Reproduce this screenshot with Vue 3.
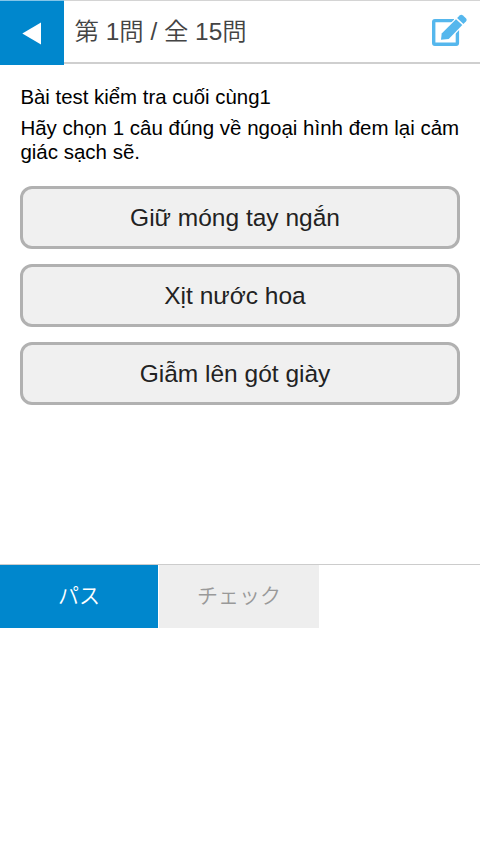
<template>
  <div class="quiz">
    <!-- Header -->
    <header class="quiz-header">
      <button class="btn-back" aria-label="戻る">
        <svg width="64" height="64" viewBox="0 0 64 64">
          <path d="M22.3 32.4L41 21.6v21.8z" fill="#ffffff" />
        </svg>
      </button>
      <h1 class="quiz-title">第 {{ current }}問 / 全 {{ total }}問</h1>
      <button class="btn-memo" aria-label="メモ">
        <svg width="36" height="36" viewBox="0 0 36 36">
          <path
            d="M23 8.6H3.9Q2.7 8.6 2.7 9.8v21.3q0 1.2 1.2 1.2h21.3q1.2 0 1.2-1.2V18"
            fill="none"
            stroke="#55b7ed"
            stroke-width="3.4"
          />
          <path d="M10 27.7l.7-6.2L25 7.3l6.3 5.7L17.7 27z" fill="#ffffff" stroke="#ffffff" stroke-width="2.4" />
          <path d="M10 27.7l.7-6.2L25 7.3l6.3 5.7L17.7 27z" fill="#55b7ed" />
          <path
            d="M26.1 6l2.5-2.6q1.7-1.4 3.4 0l2.9 2.8q1.4 1.7 0 3.3L32.4 12z"
            fill="#55b7ed"
          />
        </svg>
      </button>
    </header>

    <!-- Question -->
    <main class="quiz-body">
      <p class="quiz-name">Bài test kiểm tra cuối cùng1</p>
      <p class="question">Hãy chọn 1 câu đúng về ngoại hình đem lại cảm giác sạch sẽ.</p>
      <div class="choices">
        <button v-for="c in choices" :key="c" class="choice">{{ c }}</button>
      </div>
    </main>

    <!-- Footer -->
    <footer class="quiz-footer">
      <button class="btn-pass">パス</button>
      <button class="btn-check" disabled>チェック</button>
    </footer>
  </div>
</template>

<script setup>
const current = 1
const total = 15
const choices = ['Giữ móng tay ngắn', 'Xịt nước hoa', 'Giẫm lên gót giày']
</script>

<style>
body {
  margin: 0;
  background: #ffffff;
}
</style>

<style scoped>
.quiz {
  width: 480px;
  height: 628px;
  display: flex;
  flex-direction: column;
  font-family: 'Liberation Sans', 'Noto Sans CJK JP', sans-serif;
  color: #000000;
}
button {
  margin: 0;
  padding: 0;
  border: none;
  background: none;
  font-family: inherit;
}

/* Header */
.quiz-header {
  display: flex;
  height: 64px;
  box-sizing: border-box;
  border-top: 1px solid #d4d4d4;
  box-shadow: inset 0 -2px #cfcfcf;
}
.btn-back {
  width: 64px;
  height: 65px;
  margin-top: -1px;
  background: #0087cd;
  border-top: 1px solid #84c5e8;
}
.btn-back svg {
  display: block;
}
.quiz-title {
  flex: 1;
  margin: 0 0 0 10.5px;
  font-size: 24.4px;
  font-weight: 350;
  line-height: 61px;
  color: #444444;
}
.btn-memo {
  width: 36px;
  height: 36px;
  margin: 11px 13px 0 0;
}
.btn-memo svg {
  display: block;
}

/* Question */
.quiz-body {
  flex: 1;
  padding: 21px 20px 0;
}
.quiz-name,
.question {
  margin: 0 0 0 0.4px;
  font-size: 20.4px;
  line-height: 24px;
}
.question {
  margin-top: 7px;
  margin-right: -1px;
  font-size: 20.5px;
}

/* Choices */
.choices {
  display: flex;
  flex-direction: column;
  gap: 15px;
  margin-top: 22px;
}
.choice {
  height: 63px;
  padding-right: 10px;
  background: #f0f0f0;
  border: 3px solid #b1b1b1;
  border-radius: 12px;
  font-size: 24.5px;
  color: #222222;
}

/* Footer */
.quiz-footer {
  display: flex;
  gap: 1px;
  height: 63px;
  border-top: 1px solid #cccccc;
}
.btn-pass,
.btn-check {
  padding-bottom: 5px;
  font-size: 21px;
  font-weight: 350;
}
.btn-pass {
  width: 158px;
  background: #0087cd;
  color: #ffffff;
}
.btn-check {
  width: 160px;
  background: #eeeeee;
  color: #999999;
}
</style>
